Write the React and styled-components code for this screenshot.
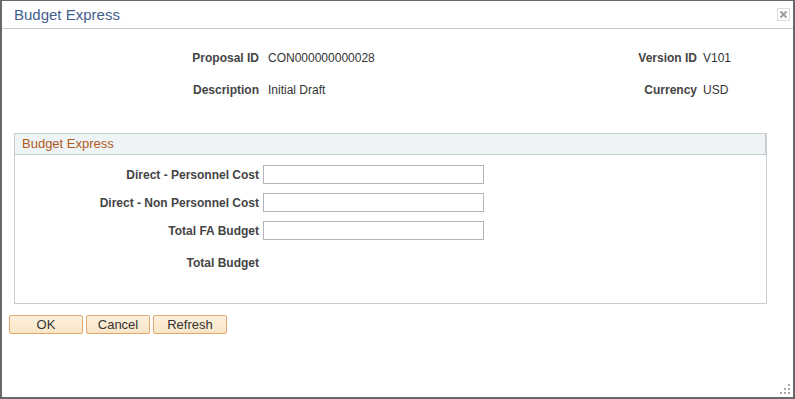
import React from "react";
import styled, { createGlobalStyle } from "styled-components";

const Global = createGlobalStyle`
  html, body { margin: 0; padding: 0; background: #fff; }
  body { font-family: Arial, "Liberation Sans", sans-serif; }
  * { box-sizing: border-box; }
`;

const Dialog = styled.div`
  position: relative;
  width: 795px;
  height: 399px;
  border: 2px solid #686868;
  border-top-width: 1px;
  background: #fff;
  display: flex;
  flex-direction: column;
`;

const TitleBar = styled.div`
  height: 28px;
  border-bottom: 1px solid #cccccc;
  display: flex;
  align-items: center;
  justify-content: space-between;
  padding: 0 3px 1px 12px;
`;

const Title = styled.div`
  font-size: 15px;
  color: #3f5e8c;
  font-family: Arial, "Liberation Sans", sans-serif;
`;

const CloseBtn = styled.div`
  width: 13px;
  height: 13px;
  border: 1px solid #dcdcdc;
  display: flex;
  align-items: center;
  justify-content: center;
  margin-top: 1px;
`;

const InfoBlock = styled.div`
  display: flex;
  flex-direction: column;
  gap: 16px;
  padding-top: 21px;
`;

const InfoRow = styled.div`
  display: flex;
  align-items: center;
  height: 16px;
`;

const Label = styled.div`
  width: ${(p) => p.$w}px;
  margin-right: ${(p) => p.$gap}px;
  text-align: right;
  font-weight: bold;
  font-size: 12px;
  color: #444;
  white-space: nowrap;
`;

const Value = styled.div`
  width: ${(p) => (p.$w ? `${p.$w}px` : "auto")};
  font-size: 12px;
  color: #333;
  white-space: nowrap;
`;

const GroupBox = styled.div`
  margin: 35px 0 0 12px;
  width: 753px;
  border: 1px solid #c9ced4;
  border-top: none;
  display: flex;
  flex-direction: column;
`;

const GroupHeader = styled.div`
  height: 22px;
  background: #eef3f5;
  border-top: 1px solid #c9ced4;
  border-bottom: 1px solid #c9ced4;
  border-right: 2px solid #c9ced4;
  margin-right: -1px;
  display: flex;
  align-items: center;
  padding-left: 7px;
  padding-bottom: 1px;
  font-size: 13px;
  color: #b05a1c;
`;

const Fields = styled.div`
  display: flex;
  flex-direction: column;
  gap: 9px;
  padding: 10px 0 31px 0;
`;

const FieldRow = styled.div`
  display: flex;
  align-items: center;
  height: 19px;
  margin-top: ${(p) => p.$mt || 0}px;
`;

const Input = styled.input`
  width: 221px;
  height: 19px;
  border: 1px solid #b5b5b5;
  padding: 0 3px;
  margin: 0;
  font-size: 12px;
  outline: none;
`;

const Buttons = styled.div`
  display: flex;
  gap: 3px;
  margin: 11px 0 0 7px;
`;

const Button = styled.button`
  width: ${(p) => p.$w}px;
  height: 19px;
  padding: 0;
  border: 1px solid #e2a86c;
  border-radius: 2px;
  background: linear-gradient(#fdf1de, #f9e5c6);
  font-family: Arial, "Liberation Sans", sans-serif;
  font-size: 13px;
  color: #333;
  cursor: pointer;
`;

const Grip = styled.svg`
  position: absolute;
  right: 2px;
  bottom: 2px;
`;

export default function App() {
  return (
    <>
      <Global />
      <Dialog>
        <TitleBar>
          <Title>Budget Express</Title>
          <CloseBtn>
            <svg width="9" height="9" viewBox="0 0 9 9">
              <path d="M1.5 1.5 L7.5 7.5 M7.5 1.5 L1.5 7.5" stroke="#9a9a9a" strokeWidth="1.8" />
            </svg>
          </CloseBtn>
        </TitleBar>

        <InfoBlock>
          <InfoRow>
            <Label $w={257} $gap={9}>Proposal ID</Label>
            <Value $w={355}>CON000000000028</Value>
            <Label $w={74} $gap={6}>Version ID</Label>
            <Value>V101</Value>
          </InfoRow>
          <InfoRow>
            <Label $w={257} $gap={9}>Description</Label>
            <Value $w={355}>Initial Draft</Value>
            <Label $w={74} $gap={6}>Currency</Label>
            <Value>USD</Value>
          </InfoRow>
        </InfoBlock>

        <GroupBox>
          <GroupHeader>Budget Express</GroupHeader>
          <Fields>
            <FieldRow>
              <Label $w={244} $gap={4}>Direct - Personnel Cost</Label>
              <Input />
            </FieldRow>
            <FieldRow>
              <Label $w={244} $gap={4}>Direct - Non Personnel Cost</Label>
              <Input />
            </FieldRow>
            <FieldRow>
              <Label $w={244} $gap={4}>Total FA Budget</Label>
              <Input />
            </FieldRow>
            <FieldRow $mt={4}>
              <Label $w={244} $gap={4}>Total Budget</Label>
            </FieldRow>
          </Fields>
        </GroupBox>

        <Buttons>
          <Button $w={74}>OK</Button>
          <Button $w={64}>Cancel</Button>
          <Button $w={74}>Refresh</Button>
        </Buttons>

        <Grip width="11" height="11" viewBox="0 0 11 11">
          <g fill="#a8a8a8">
            <rect x="8" y="0" width="2" height="2" />
            <rect x="4" y="4" width="2" height="2" />
            <rect x="8" y="4" width="2" height="2" />
            <rect x="0" y="8" width="2" height="2" />
            <rect x="4" y="8" width="2" height="2" />
            <rect x="8" y="8" width="2" height="2" />
          </g>
        </Grip>
      </Dialog>
    </>
  );
}
